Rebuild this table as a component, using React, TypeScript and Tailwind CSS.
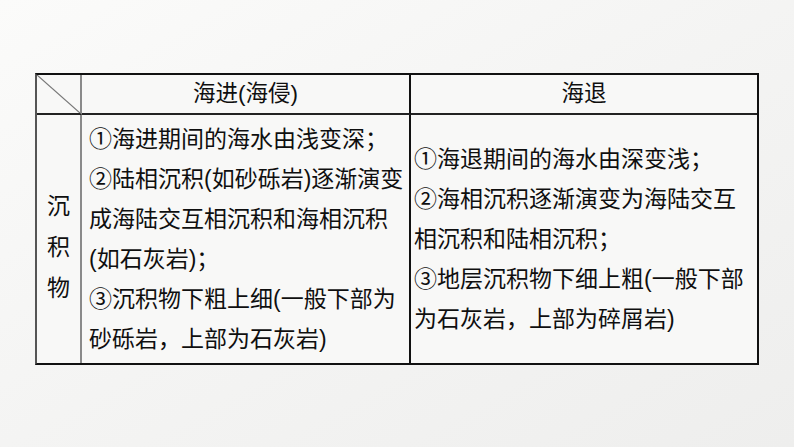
import React from "react";

const font = {
  fontFamily: '"Liberation Sans", "Noto Sans CJK SC", sans-serif',
};

const transgression = [
  "①海进期间的海水由浅变深；",
  "②陆相沉积(如砂砾岩)逐渐演变",
  "成海陆交互相沉积和海相沉积",
  "(如石灰岩)；",
  "③沉积物下粗上细(一般下部为",
  "砂砾岩，上部为石灰岩)",
];

const regression = [
  "①海退期间的海水由深变浅；",
  "②海相沉积逐渐演变为海陆交互",
  "相沉积和陆相沉积；",
  "③地层沉积物下细上粗(一般下部",
  "为石灰岩，上部为碎屑岩)",
];

export default function App() {
  return (
    <div
      className="w-[794px] h-[447px] overflow-hidden bg-linear-to-br from-[#fbfbfa] via-[#f4f4f3] to-[#eeeeed] pt-[73px] pl-[35px] text-[#0f0f0f]"
      style={font}
    >
      <div className="w-[724px] h-[292px] grid grid-cols-[45px_329px_346px] grid-rows-[40px_248px] border-2 border-[#111] border-l-[#555] bg-[#f8f8f7]">
        <div className="relative border-r-2 border-b-2 border-r-[#8a8a8a] border-b-[#222]">
          <svg className="absolute inset-0" width="43" height="38" viewBox="0 0 43 38">
            <line x1="0" y1="0" x2="43" y2="38" stroke="#777" strokeWidth="1.2" />
          </svg>
        </div>
        <div className="border-r-2 border-b-2 border-r-[#111] border-b-[#222] flex items-center justify-center text-[22.5px]">
          海进(海侵)
        </div>
        <div className="border-b-2 border-b-[#222] flex items-center justify-center text-[22.5px]">
          海退
        </div>

        <div className="border-r-2 border-r-[#8a8a8a] flex flex-col items-center justify-center pt-4 text-[23px] leading-[41px]">
          <span>沉</span>
          <span>积</span>
          <span>物</span>
        </div>
        <div className="border-r-2 border-r-[#111] flex flex-col justify-center pl-[7px] text-[23px] leading-[40px] whitespace-nowrap">
          {transgression.map((line) => (
            <div key={line}>{line}</div>
          ))}
        </div>
        <div className="flex flex-col justify-center pl-[3px] text-[23px] leading-[40px] whitespace-nowrap">
          {regression.map((line) => (
            <div key={line}>{line}</div>
          ))}
        </div>
      </div>
    </div>
  );
}
